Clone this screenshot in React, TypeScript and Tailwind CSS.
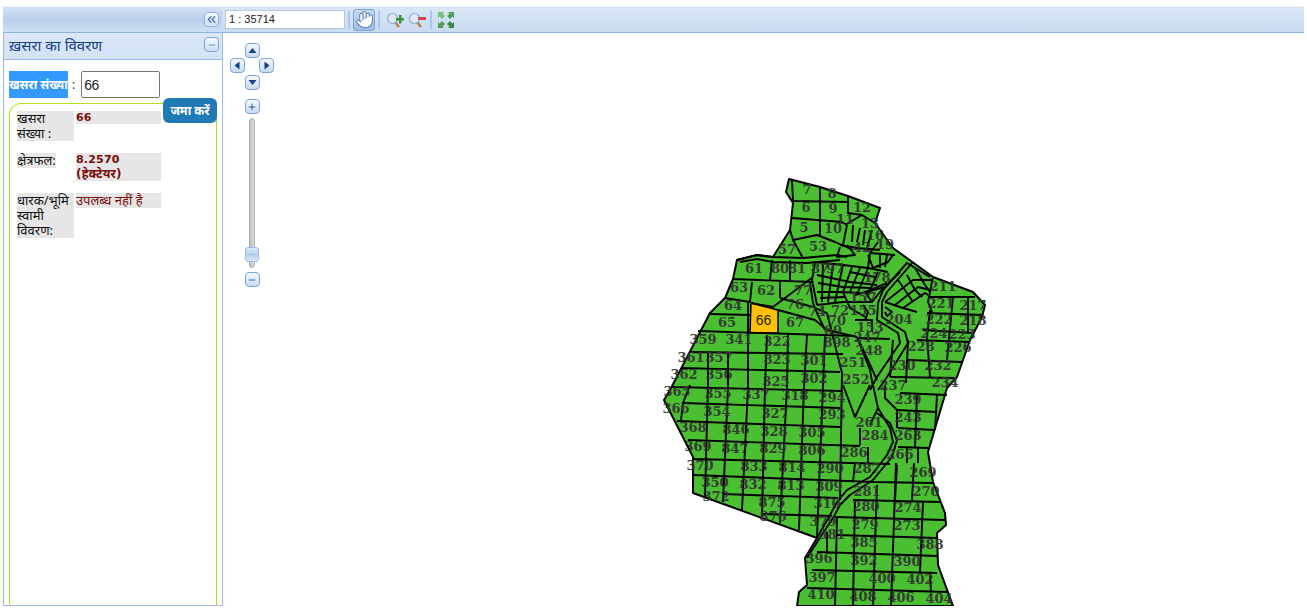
import { ChevronsLeft, Hand, Minus, Plus } from 'lucide-react';

const outline =
  '789,179 820,187 848,196 880,208 875,223 893,248 933,277 973,292 985,305 982,317 970,340 957,377 947,388 928,452 933,482 945,513 946,525 937,533 938,565 953,606 797,606 799,592 807,585 805,558 817,538 693,493 693,457 664,400 670,390 710,313 725,298 733,279 737,260 757,255 773,257 790,230 793,203 786,192';

const parcel66 = '751,303 778,310 778,333 750,333';

const lines = [
  // vertical grid
  '708,352 708,385 705,497',
  '728,352 728,388 723,502',
  '748,302 748,388 742,510',
  '767,335 765,387 762,517',
  '788,335 787,387 780,523',
  '807,335 804,387 799,530',
  '825,335 823,387 817,537',
  '827,313 842,373 840,500',
  '843,385 855,417 870,385',
  '877,485 873,606',
  '896,463 891,606',
  '914,463 912,500',
  '923,502 920,572',
  '930,575 931,592',
  '855,500 853,606',
  '837,517 835,606',
  '827,532 827,552',
  '860,428 860,445',
  '868,447 868,463',
  '855,463 853,482',
  '690,385 683,403 681,420',
  // horizontal grid
  '698,331 855,336',
  '690,352 843,354',
  '681,368 840,372',
  '672,387 842,391',
  '683,403 840,408',
  '677,421 840,427',
  '688,440 860,446',
  '693,459 890,464',
  '693,475 873,482 933,483',
  '723,494 838,498',
  '853,500 940,502',
  '762,514 832,516',
  '835,517 945,520',
  '837,535 937,538',
  '817,552 938,556',
  '812,570 937,573',
  '807,588 947,592',
  // right block
  '900,393 947,395',
  '897,410 937,412',
  '898,428 935,430',
  '898,447 928,448',
  '917,394 915,447',
  '937,395 935,430',
  '907,448 907,463',
  '918,448 918,463',
  '897,465 895,500',
  '930,297 975,297',
  '927,313 983,315',
  '923,330 972,333',
  '917,340 970,342',
  '908,360 963,362',
  '890,377 957,378',
  '953,297 947,360',
  '968,297 968,333',
  '930,310 927,337 930,377',
  '908,340 906,383',
  // river
  '930,277 907,263 883,290 878,303 877,320 898,333 900,343 877,377 870,390',
  '913,262 887,292 882,302 882,317 905,332 908,343 887,377 878,390',
  '873,385 878,408 890,428 893,442 887,455 870,477 847,490 837,502 830,515 817,538',
  '885,385 885,398 897,410 897,428',
  '877,413 890,423 897,440 892,457 873,480 850,495 840,505 833,518 823,533 807,558',
  '878,408 870,425',
  // top block
  '792,180 793,201 848,202',
  '792,218 842,222 847,225',
  '820,187 820,237',
  '848,196 848,213 862,215',
  '793,240 817,235 835,242 853,250',
  '790,230 793,240 803,258',
  '737,260 757,255 773,257 803,258 837,255 847,257',
  '740,262 757,259 773,262 807,263 840,260',
  '772,260 770,280',
  '790,260 790,280',
  '732,279 813,282',
  '752,282 750,302',
  '725,298 750,302',
  '780,282 780,298',
  '751,303 773,307 813,277',
  '778,310 815,320 827,330 857,337',
  '710,314 750,315',
  '780,298 813,307 827,313',
  '810,283 813,303 817,313 825,330',
  '857,337 870,370 873,387',
  '860,343 877,380',
  '857,338 890,339',
  '893,340 890,377',
  // dense parcels
  '815,262 843,265 868,268 888,272',
  '817,275 850,282 877,285',
  '817,292 837,292 863,293 887,283',
  '823,262 822,302',
  '833,265 828,302',
  '843,265 835,302',
  '852,267 843,292',
  '860,268 850,292',
  '868,268 858,292',
  '878,272 868,295',
  '817,305 843,302 872,302',
  '815,263 812,280 817,305',
  '843,292 850,308 867,318',
  '863,305 868,312 865,320',
  '855,320 872,320 872,332',
  '845,225 862,215 875,223',
  '847,225 843,245',
  '853,225 852,242',
  '860,228 857,242',
  '865,230 863,245',
  '872,230 867,248',
  '878,242 870,253 895,255',
  '840,245 857,248 880,250',
  '840,247 837,257 855,255 847,245',
  '868,255 873,268 888,262 893,255',
  '818,283 843,287 870,288',
  '820,298 845,297',
  '850,272 875,277',
  '855,295 885,287',
  '865,292 872,302 880,292 900,272',
  '870,253 868,268',
  '880,255 880,268',
  '887,255 885,267',
  '885,302 913,280 932,280',
  '895,305 918,287 930,290',
  '903,308 925,293 928,295',
  '898,280 907,293 913,302',
  '907,275 915,290 922,297',
  '915,268 925,285 930,292',
  '885,302 903,308 917,312',
  '885,307 892,312 887,316 885,312',
  '933,277 928,302 932,312',
];

const labels: [string, number, number][] = [
  ['7', 807, 189], ['8', 832, 193], ['12', 862, 207], ['6', 806, 207], ['9', 833, 208], ['5', 804, 227],
  ['10', 833, 228], ['11', 845, 219], ['13', 870, 223], ['16', 875, 235], ['19', 885, 244], ['42', 862, 247],
  ['53', 818, 246], ['57', 787, 249], ['61', 754, 268], ['80', 780, 268], ['81', 797, 268], ['87', 820, 268],
  ['97', 835, 268], ['63', 739, 287], ['62', 766, 290], ['77', 803, 290], ['178', 877, 277], ['211', 943, 286],
  ['64', 733, 305], ['76', 795, 304], ['74', 817, 311], ['72', 840, 310], ['155', 863, 310], ['157', 863, 297],
  ['221', 941, 303], ['217', 973, 305], ['204', 899, 319], ['65', 727, 322], ['67', 795, 322], ['70', 837, 320],
  ['153', 870, 327], ['222', 939, 319], ['218', 973, 320], ['69', 833, 330], ['247', 867, 337], ['224', 934, 333],
  ['223', 962, 334], ['359', 703, 339], ['341', 739, 339], ['322', 777, 341], ['898', 837, 342], ['228', 921, 346],
  ['226', 958, 347], ['248', 869, 350], ['361', 691, 357], ['357', 719, 357], ['823', 777, 359], ['301', 814, 360],
  ['251', 853, 362], ['230', 902, 365], ['232', 938, 365], ['362', 684, 374], ['356', 719, 374], ['325', 776, 381],
  ['302', 814, 378], ['252', 856, 379], ['237', 893, 385], ['234', 945, 382], ['365', 677, 391], ['355', 718, 393],
  ['337', 756, 394], ['318', 795, 395], ['294', 832, 397], ['239', 908, 399], ['366', 676, 408], ['354', 717, 411],
  ['327', 775, 413], ['293', 832, 414], ['243', 908, 417], ['261', 869, 422], ['368', 693, 427], ['846', 736, 429],
  ['328', 774, 431], ['305', 812, 432], ['284', 875, 435], ['263', 908, 435], ['369', 698, 446], ['847', 735, 448],
  ['829', 773, 448], ['806', 812, 450], ['286', 854, 452], ['266', 900, 454], ['370', 700, 465], ['833', 754, 466],
  ['814', 792, 467], ['290', 830, 468], ['287', 867, 468], ['269', 923, 472], ['350', 715, 482], ['832', 753, 484],
  ['813', 791, 485], ['309', 829, 486], ['281', 867, 491], ['270', 926, 491], ['372', 716, 496], ['875', 772, 502],
  ['310', 827, 503], ['280', 866, 506], ['274', 908, 507], ['876', 773, 516], ['379', 823, 521], ['279', 865, 524],
  ['273', 907, 525], ['381', 832, 534], ['385', 864, 542], ['388', 930, 544], ['396', 819, 558], ['392', 864, 560],
  ['390', 907, 561], ['397', 822, 577], ['400', 882, 578], ['402', 920, 579], ['410', 821, 594], ['408', 863, 596],
  ['406', 901, 597], ['404', 939, 598],
];

const ctrlBtn =
  'flex h-[15px] w-[15px] items-center justify-center rounded-[4px] border border-[#7da5dc] bg-gradient-to-b from-[#f4f8fe] to-[#c9dcf6] text-[#15428b]';

const Triangle = ({ points }: { points: string }) => (
  <svg width="9" height="9" viewBox="0 0 9 9">
    <polygon points={points} fill="#15428b" />
  </svg>
);

const Magnifier = ({ zoomIn }: { zoomIn: boolean }) => (
  <svg width="18" height="16" viewBox="0 0 18 16">
    <line x1="9" y1="10" x2="13" y2="15" stroke="#b9823f" strokeWidth="2.5" />
    <circle cx="6.5" cy="6.5" r="5" fill="#dceafa" stroke="#8fb0d6" strokeWidth="1.2" />
    {zoomIn ? (
      <path d="M10 6h3V3h2.500v3h2.500v2.500h-2.500v3H13v-3h-3z" fill="#3f8f3a" />
    ) : (
      <rect x="10" y="5" width="8" height="3" fill="#d8434b" />
    )}
  </svg>
);

const ExpandIcon = () => (
  <svg width="18" height="18" viewBox="0 0 18 18">
    <polygon points="1,1 7,1 5.500,2.500 8,5 5,8 2.500,5.500 1,7" fill="#74c07c" />
    <polygon points="17,1 11,1 12.500,2.500 10,5 13,8 15.500,5.500 17,7" fill="#4f9d57" />
    <polygon points="1,17 7,17 5.500,15.500 8,13 5,10 2.500,12.500 1,11" fill="#4f9d57" />
    <polygon points="17,17 11,17 12.500,15.500 10,13 13,10 15.500,12.500 17,11" fill="#3b8a48" />
  </svg>
);

const Divider = () => <div className="h-[18px] w-[2px] bg-[#a9c6ee]" />;

const MapDrawing = () => (
  <svg viewBox="223 33 1084 573" className="block h-[573px] w-[1084px]">
    <polygon points={outline} fill="#4abf32" stroke="#000" strokeWidth="2" strokeLinejoin="round" />
    <polygon points={parcel66} fill="#ffc000" />
    <g fill="none" stroke="#000" strokeWidth="1.9" strokeLinejoin="round">
      {lines.map((pts, i) => (
        <polyline key={i} points={pts} />
      ))}
      <polygon points={parcel66} strokeWidth="1.5" />
    </g>
    <g
      fill="#333"
      fontFamily="'DejaVu Serif', serif"
      fontWeight="700"
      fontSize="13"
      textAnchor="middle"
      dominantBaseline="central"
      opacity="0.92"
    >
      {labels.map(([text, x, y]) => (
        <text key={text + x} x={x} y={y}>
          {text}
        </text>
      ))}
    </g>
    <text x="763.500" y="320" fill="#222" fontFamily="'Liberation Sans', sans-serif" fontSize="14" textAnchor="middle" dominantBaseline="central">
      66
    </text>
  </svg>
);

export default function App() {
  return (
    <div className="h-[612px] w-[1307px] overflow-hidden bg-white pl-[3px] pt-[6px] font-['Noto_Sans','Liberation_Sans',sans-serif] text-black">
      {/* top toolbar */}
      <div className="mr-[3px] flex h-[27px] border-b border-t border-b-[#8db2e3] border-t-[#eef3fa] bg-gradient-to-b from-[#d9e6f6] to-[#c9dbf0]">
        <div className="flex w-[219px] items-center justify-end bg-gradient-to-b from-[#d4e2f5] via-[#b9cfec] to-[#cddef3] pr-[3px]">
          <button className="flex h-[15px] w-[15px] items-center justify-center rounded-[4px] border border-[#8fb2e0] bg-gradient-to-b from-[#f4f8fe] to-[#d3e2f7] text-[#4a78bd]">
            <ChevronsLeft size={13} strokeWidth={2.5} />
          </button>
        </div>
        <div className="flex items-center pl-[3px]">
          <div className="flex h-[19px] w-[120px] items-center border border-[#b5c8e0] bg-white pl-[3px] font-['Liberation_Sans',sans-serif] text-[11px] text-[#222]">
            1 : 35714
          </div>
          <div className="ml-[3px]">
            <Divider />
          </div>
          <button className="ml-[3px] flex h-[22px] w-[22px] items-center justify-center rounded-[3px] border border-[#7fa3d4] bg-gradient-to-b from-[#c5d9f3] to-[#9dbde8]">
            <Hand size={19} strokeWidth={1.3} color="#5f7fa8" fill="#fff" />
          </button>
          <div className="ml-[3px]">
            <Divider />
          </div>
          <div className="ml-[6px]">
            <Magnifier zoomIn />
          </div>
          <div className="ml-[4px]">
            <Magnifier zoomIn={false} />
          </div>
          <div className="ml-[4px]">
            <Divider />
          </div>
          <div className="ml-[5px]">
            <ExpandIcon />
          </div>
        </div>
      </div>

      <div className="flex">
        {/* left panel */}
        <div className="flex h-[573px] w-[220px] shrink-0 flex-col overflow-hidden border-x border-b border-[#99bbe8]">
          <div className="flex h-[27px] shrink-0 items-start justify-between border-b border-[#99bbe8] bg-gradient-to-b from-[#dbe7f8] to-[#d3e2f6] pl-[5px] pr-[3px] pt-[4px]">
            <span className="text-[15px] leading-[17px] text-[#15428b]">ख़सरा का विवरण</span>
            <button className={ctrlBtn}>
              <Minus size={10} strokeWidth={2} color="#5c7fb5" />
            </button>
          </div>
          <div className="relative min-h-0 flex-1 px-[5px] pt-[11px]">
            <div className="flex h-[27px] items-center">
              <label className="flex h-[27px] w-[59px] items-center overflow-hidden whitespace-nowrap bg-[#3399ff] text-[12px] font-bold text-white">
                खसरा संख्या
              </label>
              <span className="ml-[4px] text-[12px] text-[#333]">:</span>
              <input
                readOnly
                value="66"
                className="ml-[6px] h-[27px] w-[79px] rounded-[2px] border border-[#767676] bg-white px-[2px] font-['Liberation_Sans',sans-serif] text-[14px] tracking-[-0.5px] text-[#222]"
              />
            </div>
            <button className="absolute left-[159px] top-[38px] h-[25px] w-[54px] rounded-[6px] bg-[#1f7ab5] text-[12px] font-bold text-white">
              जमा करें
            </button>
            <div className="mt-[5px] flex h-[510px] flex-col gap-[12px] rounded-tl-[12px] rounded-tr-[6px] border-x border-t border-[#b2e01f] pl-[7px] pt-[7px] text-[13px] leading-[15px]">
              <div className="flex items-start gap-[2px]">
                <div className="w-[57px]">
                  <div className="w-fit bg-[#e6e6e6] text-[#111]">खसरा संख्या :</div>
                </div>
                <div className="w-[85px] bg-[#e6e6e6] font-['DejaVu_Sans',sans-serif] text-[11px] font-bold leading-[13px] tracking-[0.2px] text-[#7a0c0c]">
                  66
                </div>
              </div>
              <div className="flex items-start gap-[2px]">
                <div className="w-[57px]">
                  <div className="w-fit bg-[#e6e6e6] text-[#111]">क्षेत्रफल:</div>
                </div>
                <div className="h-[28px] w-[85px] bg-[#e6e6e6] font-['DejaVu_Sans','Noto_Sans',sans-serif] text-[11px] font-bold leading-[14px] tracking-[0.2px] text-[#7a0c0c]">
                  8.2570 <span className="text-[12px]">(हेक्टेयर)</span>
                </div>
              </div>
              <div className="flex items-start gap-[2px]">
                <div className="w-[57px]">
                  <div className="w-fit bg-[#e6e6e6] text-[#111]">धारक/भूमि स्वामी विवरण:</div>
                </div>
                <div className="w-[85px] bg-[#e6e6e6] text-[#7a0c0c]">उपलब्ध नहीं है</div>
              </div>
            </div>
          </div>
        </div>

        {/* map */}
        <div className="relative h-[573px] flex-1">
          <MapDrawing />
          <div className="absolute left-[7px] top-[10px] flex w-[44px] flex-col items-center">
            <button className={ctrlBtn}>
              <Triangle points="0.500,7 8.500,7 4.500,2" />
            </button>
            <div className="flex w-full justify-between">
              <button className={ctrlBtn}>
                <Triangle points="6.500,0.500 6.500,8.500 1.500,4.500" />
              </button>
              <button className={ctrlBtn}>
                <Triangle points="2.500,0.500 2.500,8.500 7.500,4.500" />
              </button>
            </div>
            <button className={`${ctrlBtn} mt-[2px]`}>
              <Triangle points="0.500,2 8.500,2 4.500,7" />
            </button>
            <button className={`${ctrlBtn} mt-[9px]`}>
              <Plus size={10} strokeWidth={2} />
            </button>
            <div className="relative mt-[4px] flex h-[150px] w-[6px] rounded-[3px] border border-[#b0b0b0] bg-gradient-to-r from-[#bdbdbd] to-[#e0e0e0]">
              <div className="absolute -left-[5px] bottom-[5px] flex h-[15px] w-[14px] items-center justify-center rounded-[3px] border border-[#9dbbe6] bg-gradient-to-b from-[#dbe8fb] via-[#b7cff2] to-[#dbe8fb]">
                <Minus size={9} strokeWidth={1.5} color="#8fa8d0" />
              </div>
            </div>
            <button className={`${ctrlBtn} mt-[4px]`}>
              <Minus size={10} strokeWidth={2} />
            </button>
          </div>
        </div>
      </div>
    </div>
  );
}
